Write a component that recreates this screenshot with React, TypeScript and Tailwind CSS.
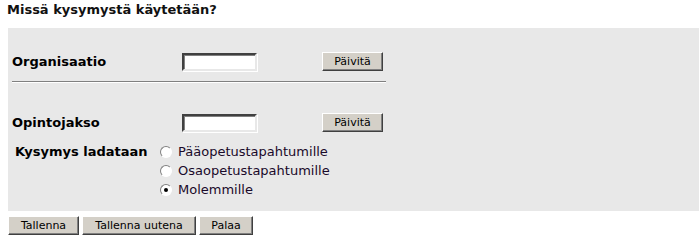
import React from "react";

const btn =
  "h-[19px] bg-[#d4d0c8] border border-t-white border-l-white border-r-[#404040] border-b-[#404040] shadow-[inset_-1px_-1px_0_#808080] text-[11px] leading-[15px] text-black px-[6px]";

const input =
  "w-[75px] h-[18px] bg-white border-2 border-t-[#404040] border-l-[#404040] border-r-[#e8e8e8] border-b-[#e8e8e8] shadow-[inset_1px_1px_0_#808080,1px_1px_0_#fff]";

function Radio({ checked }: { checked?: boolean }) {
  return (
    <span className="w-[12px] h-[12px] rounded-full bg-white border border-t-[#808080] border-l-[#808080] border-r-white border-b-white flex items-center justify-center shrink-0">
      {checked && <span className="w-[4px] h-[4px] rounded-full bg-black" />}
    </span>
  );
}

export default function App() {
  return (
    <div
      className="w-[699px] h-[244px] bg-white text-black overflow-hidden"
      style={{ fontFamily: '"DejaVu Sans", Verdana, sans-serif' }}
    >
      <div className="pl-[7px] pt-[2px] h-[28px] text-[13px] font-bold leading-[16px] text-[#111]">
        Missä kysymystä käytetään?
      </div>
      <div className="ml-[8px] h-[183px] bg-[#e8e8e8] pl-[4px] pt-[24px]">
        <div className="flex items-center h-[19px]">
          <div className="w-[170px] text-[13px] font-bold">Organisaatio</div>
          <div className={input} />
          <div className="w-[65px]" />
          <button className={`${btn} w-[61px]`}>Päivitä</button>
        </div>
        <div className="mt-[10px] w-[374px] h-[2px] border-t border-t-[#808080] border-b border-b-white" />
        <div className="mt-[30px] flex items-center h-[19px]">
          <div className="w-[170px] text-[13px] font-bold">Opintojakso</div>
          <div className={input} />
          <div className="w-[65px]" />
          <button className={`${btn} w-[61px]`}>Päivitä</button>
        </div>
        <div className="mt-[10px] flex">
          <div className="w-[148px] pl-[3px] text-[13px] font-bold leading-[19px]">
            Kysymys ladataan
          </div>
          <div className="flex flex-col">
            {[
              ["Pääopetustapahtumille", false],
              ["Osaopetustapahtumille", false],
              ["Molemmille", true],
            ].map(([t, c]) => (
              <div key={t as string} className="flex items-center h-[19px]">
                <Radio checked={c as boolean} />
                <span className="ml-[6px] text-[13px] text-[#1a0a2a]">{t as string}</span>
              </div>
            ))}
          </div>
        </div>
      </div>
      <div className="ml-[8px] mt-[5px] flex gap-[3px]">
        <button className={`${btn} w-[71px]`}>Tallenna</button>
        <button className={`${btn} w-[114px]`}>Tallenna uutena</button>
        <button className={`${btn} w-[54px]`}>Palaa</button>
      </div>
    </div>
  );
}
